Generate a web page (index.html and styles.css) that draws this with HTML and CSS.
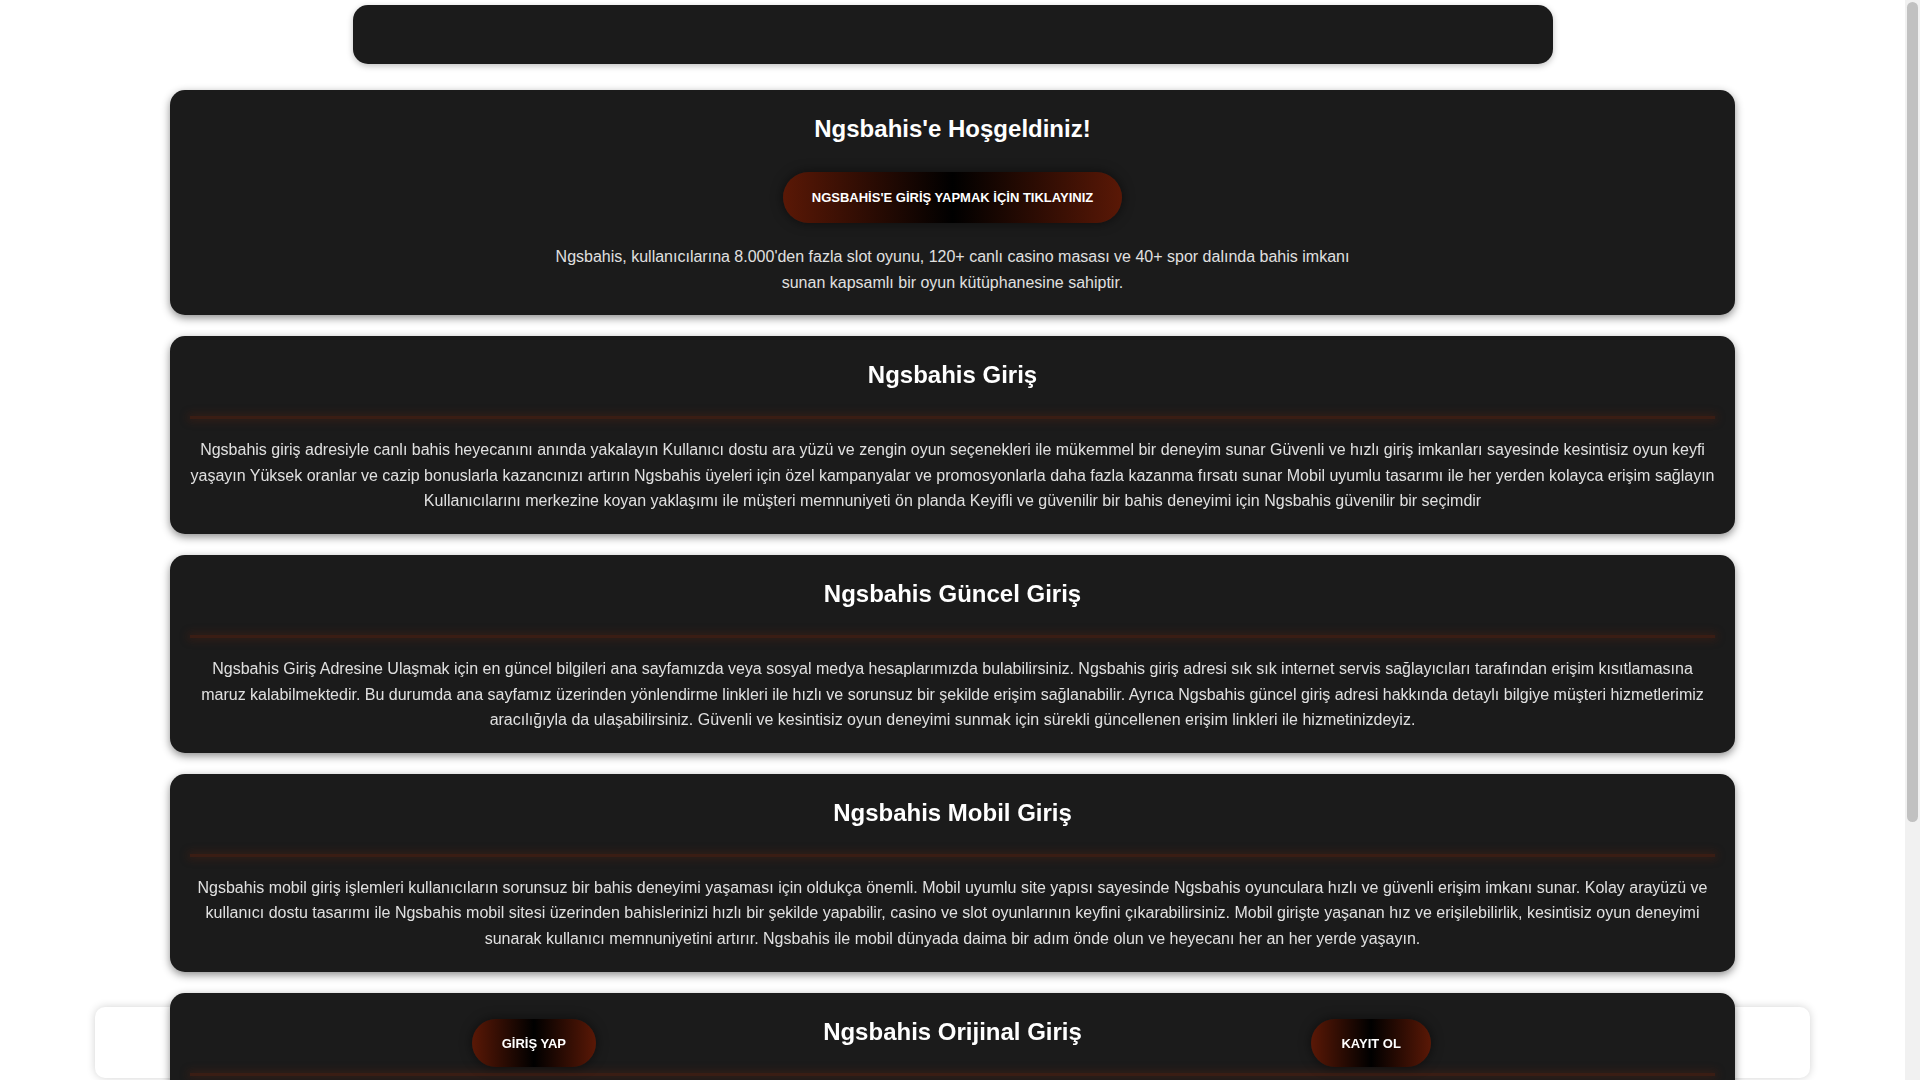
FILE: index.html
```html
<!DOCTYPE html>
<html lang="tr">
<head>
<meta charset="utf-8">
<title>Ngsbahis</title>
<link rel="stylesheet" href="styles.css">
</head>
<body>
<header class="topbar"></header>

<main class="container">
  <section class="card">
    <h2 class="card-title">Ngsbahis'e Hoşgeldiniz!</h2>
    <a class="btn btn-main" href="#">NGSBAHİS'E GİRİŞ YAPMAK İÇİN TIKLAYINIZ</a>
    <p class="intro">Ngsbahis, kullanıcılarına 8.000'den fazla slot oyunu, 120+ canlı casino masası ve 40+ spor dalında bahis imkanı sunan kapsamlı bir oyun kütüphanesine sahiptir.</p>
  </section>

  <section class="card">
    <h2 class="card-title">Ngsbahis Giriş</h2>
    <div class="divider"></div>
    <p class="text">Ngsbahis giriş adresiyle canlı bahis heyecanını anında yakalayın Kullanıcı dostu ara yüzü ve zengin oyun seçenekleri ile mükemmel bir deneyim sunar Güvenli ve hızlı giriş imkanları sayesinde kesintisiz oyun keyfi yaşayın Yüksek oranlar ve cazip bonuslarla kazancınızı artırın Ngsbahis üyeleri için özel kampanyalar ve promosyonlarla daha fazla kazanma fırsatı sunar Mobil uyumlu tasarımı ile her yerden kolayca erişim sağlayın Kullanıcılarını merkezine koyan yaklaşımı ile müşteri memnuniyeti ön planda Keyifli ve güvenilir bir bahis deneyimi için Ngsbahis güvenilir bir seçimdir</p>
  </section>

  <section class="card">
    <h2 class="card-title">Ngsbahis Güncel Giriş</h2>
    <div class="divider"></div>
    <p class="text">Ngsbahis Giriş Adresine Ulaşmak için en güncel bilgileri ana sayfamızda veya sosyal medya hesaplarımızda bulabilirsiniz. Ngsbahis giriş adresi sık sık internet servis sağlayıcıları tarafından erişim kısıtlamasına maruz kalabilmektedir. Bu durumda ana sayfamız üzerinden yönlendirme linkleri ile hızlı ve sorunsuz bir şekilde erişim sağlanabilir. Ayrıca Ngsbahis güncel giriş adresi hakkında detaylı bilgiye müşteri hizmetlerimiz aracılığıyla da ulaşabilirsiniz. Güvenli ve kesintisiz oyun deneyimi sunmak için sürekli güncellenen erişim linkleri ile hizmetinizdeyiz.</p>
  </section>

  <section class="card">
    <h2 class="card-title">Ngsbahis Mobil Giriş</h2>
    <div class="divider"></div>
    <p class="text">Ngsbahis mobil giriş işlemleri kullanıcıların sorunsuz bir bahis deneyimi yaşaması için oldukça önemli. Mobil uyumlu site yapısı sayesinde Ngsbahis oyunculara hızlı ve güvenli erişim imkanı sunar. Kolay arayüzü ve kullanıcı dostu tasarımı ile Ngsbahis mobil sitesi üzerinden bahislerinizi hızlı bir şekilde yapabilir, casino ve slot oyunlarının keyfini çıkarabilirsiniz. Mobil girişte yaşanan hız ve erişilebilirlik, kesintisiz oyun deneyimi sunarak kullanıcı memnuniyetini artırır. Ngsbahis ile mobil dünyada daima bir adım önde olun ve heyecanı her an her yerde yaşayın.</p>
  </section>

  <section class="card">
    <h2 class="card-title">Ngsbahis Orijinal Giriş</h2>
    <div class="divider"></div>
    <p class="text">Ngsbahis orijinal giriş adresi üzerinden siteye erişim sağlayarak güvenli bir bahis deneyimi yaşayabilirsiniz. Sahte sitelerden uzak durmak için yalnızca resmi bağlantıları kullanmanız önerilir. Orijinal giriş adresi sayesinde hesap bilgileriniz ve finansal işlemleriniz koruma altında olur.</p>
  </section>
</main>

<div class="bottombar-bg"></div>
<nav class="bottombar">
  <div class="bottom-cell"><a class="btn btn-small" href="#">GİRİŞ YAP</a></div>
  <div class="bottom-cell"><a class="btn btn-small" href="#">KAYIT OL</a></div>
</nav>
<div class="scroll-track"><div class="scroll-thumb"></div></div>
</body>
</html>
```

FILE: styles.css
```css
html, body {
  margin: 0;
  padding: 0;
}

html {
  margin-right: 15px;
}

body {
  background: #ffffff;
  font-family: "Liberation Sans", Arial, sans-serif;
  color: #e0e0e0;
  padding-bottom: 100px;
}

.topbar {
  width: 1200px;
  height: 59px;
  margin: 5px auto 0;
  background: #1b1b1b;
  border-radius: 15px;
  box-shadow: 0 2px 6px rgba(0, 0, 0, 0.25);
}

.container {
  max-width: 1565px;
  margin: 26px auto 0;
  display: flex;
  flex-direction: column;
  gap: 21px;
}

.card {
  position: relative;
  z-index: 2;
  background: #1b1b1b;
  border-radius: 15px;
  padding: 20px;
  box-shadow: 0 3px 8px rgba(0, 0, 0, 0.45);
  text-align: center;
}

.card-title {
  margin: 5px 0 0;
  font-size: 24px;
  line-height: 28px;
  font-weight: bold;
  color: #ffffff;
}

.btn {
  display: inline-block;
  color: #ffffff;
  font-weight: bold;
  font-size: 13px;
  line-height: 15px;
  text-decoration: none;
  border-radius: 30px;
  background: linear-gradient(90deg, #5a1806 0%, #000000 50%, #5a1806 100%);
  box-shadow: 0 0 12px rgba(0, 0, 0, 0.55);
}

.btn-main {
  margin-top: 29px;
  padding: 18px 29px;
}

.intro {
  max-width: 800px;
  margin: 21px auto 0;
  font-size: 16px;
  line-height: 25.6px;
}

.divider {
  height: 3px;
  margin-top: 27px;
  background: #3a1d14;
  box-shadow: 0 0 8px 2px rgba(95, 35, 15, 0.38);
}

.text {
  margin: 18px 0 0;
  font-size: 16px;
  line-height: 25.6px;
}

.bottombar-bg,
.bottombar {
  position: fixed;
  left: calc((100vw - 15px) * 0.05);
  right: calc(15px + (100vw - 15px) * 0.05);
  bottom: 2px;
  height: 71px;
  box-sizing: border-box;
}

.bottombar-bg {
  z-index: 1;
  background: #ffffff;
  border-radius: 10px;
  box-shadow: 0 0 8px rgba(0, 0, 0, 0.18);
}

.bottombar {
  z-index: 3;
  padding: 0 20px;
  display: grid;
  grid-template-columns: 1fr 1fr;
  align-items: center;
}

.bottom-cell {
  display: flex;
  justify-content: center;
}

.btn-small {
  padding: 17px 30px 16px;
}

.scroll-track {
  position: fixed;
  top: 0;
  right: 0;
  bottom: 0;
  width: 15px;
  background: #f1f1f1;
  z-index: 5;
}

.scroll-thumb {
  margin: 2px 2px 0;
  height: 820px;
  border-radius: 6px;
  background: #c1c1c1;
}
```
